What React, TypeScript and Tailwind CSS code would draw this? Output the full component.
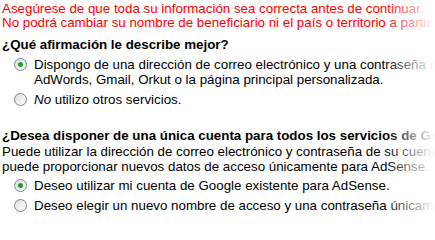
function Radio({ checked }: { checked?: boolean }) {
  return (
    <span className="mt-[1px] flex h-[13px] w-[13px] shrink-0 items-center justify-center rounded-full border border-[#7a8a99] bg-gradient-to-br from-[#dcdcd6] to-white">
      {checked && <span className="h-[5px] w-[5px] rounded-full bg-[#21a121]" />}
    </span>
  )
}

function Option({ checked, children }: { checked?: boolean; children: React.ReactNode }) {
  return (
    <div className="flex items-start gap-[7px] pl-[12px]">
      <Radio checked={checked} />
      <div className="whitespace-nowrap">{children}</div>
    </div>
  )
}

export default function App() {
  return (
    <div className="relative h-[223px] w-[435px] overflow-hidden bg-white">
      <div
        className="pl-[2px] pt-[2px] text-[13.33px] leading-[13px] text-black"
        style={{ fontFamily: '"Liberation Sans", Arial, sans-serif' }}
      >
        <div className="whitespace-nowrap text-[#ff0000]">
          <p className="leading-[14px]">Asegúrese de que toda su información sea correcta antes de continuar.</p>
          <p className="leading-[14px]">No podrá cambiar su nombre de beneficiario ni el país o territorio a partir de ahora.</p>
        </div>

        <h2 className="mt-[7px] whitespace-nowrap font-bold leading-[16px]">
          ¿Qué afirmación le describe mejor?
        </h2>

        <div className="mt-[4px] flex flex-col gap-[5px] leading-[15px]">
          <Option checked>
            Dispongo de una dirección de correo electrónico y una contraseña que utilizo con
            <br />
            AdWords, Gmail, Orkut o la página principal personalizada.
          </Option>
          <Option>
            <i>No</i> utilizo otros servicios.
          </Option>
        </div>

        <h2 className="mt-[21px] whitespace-nowrap font-bold leading-[16px]">
          ¿Desea disponer de una única cuenta para todos los servicios de Google?
        </h2>
        <p className="whitespace-nowrap leading-[15px]">
          Puede utilizar la dirección de correo electrónico y contraseña de su cuenta de Google o
          <br />
          puede proporcionar nuevos datos de acceso únicamente para AdSense.
        </p>

        <div className="mt-[4px] flex flex-col gap-[5px] leading-[15px]">
          <Option checked>Deseo utilizar mi cuenta de Google existente para AdSense.</Option>
          <Option>Deseo elegir un nuevo nombre de acceso y una contraseña únicamente para AdSense.</Option>
        </div>
      </div>

      <div className="pointer-events-none absolute right-0 top-0 h-full w-[50px] bg-gradient-to-r from-white/0 to-white" />
    </div>
  )
}
